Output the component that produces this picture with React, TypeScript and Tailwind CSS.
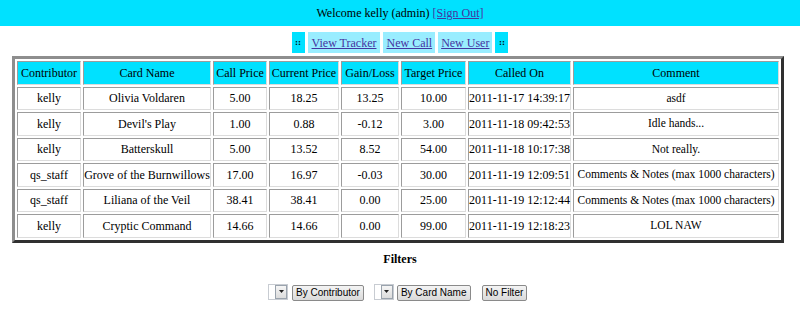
import React from "react";

type Call = {
  contributor: string;
  card: string;
  callPrice: string;
  currentPrice: string;
  gainLoss: string;
  targetPrice: string;
  calledOn: string;
  comment: string;
};

const calls: Call[] = [
  { contributor: "kelly", card: "Olivia Voldaren", callPrice: "5.00", currentPrice: "18.25", gainLoss: "13.25", targetPrice: "10.00", calledOn: "2011-11-17 14:39:17", comment: "asdf" },
  { contributor: "kelly", card: "Devil's Play", callPrice: "1.00", currentPrice: "0.88", gainLoss: "-0.12", targetPrice: "3.00", calledOn: "2011-11-18 09:42:53", comment: "Idle hands..." },
  { contributor: "kelly", card: "Batterskull", callPrice: "5.00", currentPrice: "13.52", gainLoss: "8.52", targetPrice: "54.00", calledOn: "2011-11-18 10:17:38", comment: "Not really." },
  { contributor: "qs_staff", card: "Grove of the Burnwillows", callPrice: "17.00", currentPrice: "16.97", gainLoss: "-0.03", targetPrice: "30.00", calledOn: "2011-11-19 12:09:51", comment: "Comments & Notes (max 1000 characters)" },
  { contributor: "qs_staff", card: "Liliana of the Veil", callPrice: "38.41", currentPrice: "38.41", gainLoss: "0.00", targetPrice: "25.00", calledOn: "2011-11-19 12:12:44", comment: "Comments & Notes (max 1000 characters)" },
  { contributor: "kelly", card: "Cryptic Command", callPrice: "14.66", currentPrice: "14.66", gainLoss: "0.00", targetPrice: "99.00", calledOn: "2011-11-19 12:18:23", comment: "LOL NAW" },
];

const headers: { label: string; width: string }[] = [
  { label: "Contributor", width: "w-[64px]" },
  { label: "Card Name", width: "w-[128px]" },
  { label: "Call Price", width: "w-[54px]" },
  { label: "Current Price", width: "w-[70px]" },
  { label: "Gain/Loss", width: "w-[58px]" },
  { label: "Target Price", width: "w-[65px]" },
  { label: "Called On", width: "w-[103px]" },
  { label: "Comment", width: "w-[206px]" },
];

const cell =
  "h-[23.5px] p-0 text-center whitespace-nowrap border border-t-[#9c9c9c] border-l-[#9c9c9c] border-r-[#dcdcdc] border-b-[#dcdcdc]";

const Select = (): React.ReactElement => (
  <div className="flex h-[16px] w-[20px] border border-[#c8ccd2] bg-white">
    <div className="flex-1" />
    <div className="flex w-[12px] items-center justify-center border border-[#9aa3ad] bg-gradient-to-b from-[#f6f6f6] to-[#dcdcdc]">
      <svg width="5" height="3" viewBox="0 0 5 3">
        <path d="M0 0 L5 0 L2.5 3 Z" fill="#222" />
      </svg>
    </div>
  </div>
);

const Button = ({ children }: { children: React.ReactNode }): React.ReactElement => (
  <button className="h-[16px] rounded-[2px] border border-[#8a8a8a] bg-gradient-to-b from-[#f4f4f4] to-[#dadada] px-[3px] text-[10px] leading-[14px] text-black font-[family-name:Liberation_Sans,sans-serif]">
    {children}
  </button>
);

const App: React.FC = (): React.ReactElement => {
  return (
    <div className="h-[310px] w-[800px] bg-white font-[family-name:Liberation_Serif,serif] text-[12px] text-black">
      <div className="flex h-[26px] items-center justify-center bg-[#00e1ff]">
        <span>
          Welcome kelly (admin){" "}
          <a href="#" className="text-[#4634a0] underline">
            [Sign Out]
          </a>
        </span>
      </div>

      <div className="mt-[6px] flex h-[21px] justify-center gap-[3px]">
        <div className="flex w-[13px] items-center justify-center bg-[#00e1ff] text-[9px] font-bold">::</div>
        <a href="#" className="flex items-center bg-[#99edff] px-[4px] text-[#4634a0] underline">View Tracker</a>
        <a href="#" className="flex items-center bg-[#99edff] px-[3px] text-[#4634a0] underline">New Call</a>
        <a href="#" className="flex items-center bg-[#99edff] px-[3px] text-[#4634a0] underline">New User</a>
        <div className="flex w-[13px] items-center justify-center bg-[#00e1ff] text-[9px] font-bold">::</div>
      </div>

      <div className="mt-[3px] pl-[12px]">
        <table className="w-[772px] table-fixed border-separate border-spacing-[2px] border-[3px] border-t-[#8e8e8e] border-l-[#8e8e8e] border-r-[#303030] border-b-[#303030]">
          <thead>
            <tr>
              {headers.map((h) => (
                <th key={h.label} className={`${cell} ${h.width} bg-[#00e1ff] font-normal`}>
                  {h.label}
                </th>
              ))}
            </tr>
          </thead>
          <tbody>
            {calls.map((c, i) => (
              <tr key={i}>
                <td className={cell}>{c.contributor}</td>
                <td className={cell}>{c.card}</td>
                <td className={cell}>{c.callPrice}</td>
                <td className={cell}>{c.currentPrice}</td>
                <td className={cell}>{c.gainLoss}</td>
                <td className={cell}>{c.targetPrice}</td>
                <td className={cell}>{c.calledOn}</td>
                <td className={`${cell} text-[11.5px]`}>{c.comment}</td>
              </tr>
            ))}
          </tbody>
        </table>
      </div>

      <div className="mt-[7px] text-center font-bold">Filters</div>

      <div className="mt-[15px] flex items-center pl-[268px]">
        <Select />
        <div className="ml-[4px]">
          <Button>By Contributor</Button>
        </div>
        <div className="ml-[10px]">
          <Select />
        </div>
        <div className="ml-[3px]">
          <Button>By Card Name</Button>
        </div>
        <div className="ml-[11px]">
          <Button>No Filter</Button>
        </div>
      </div>
    </div>
  );
};

export default App;
